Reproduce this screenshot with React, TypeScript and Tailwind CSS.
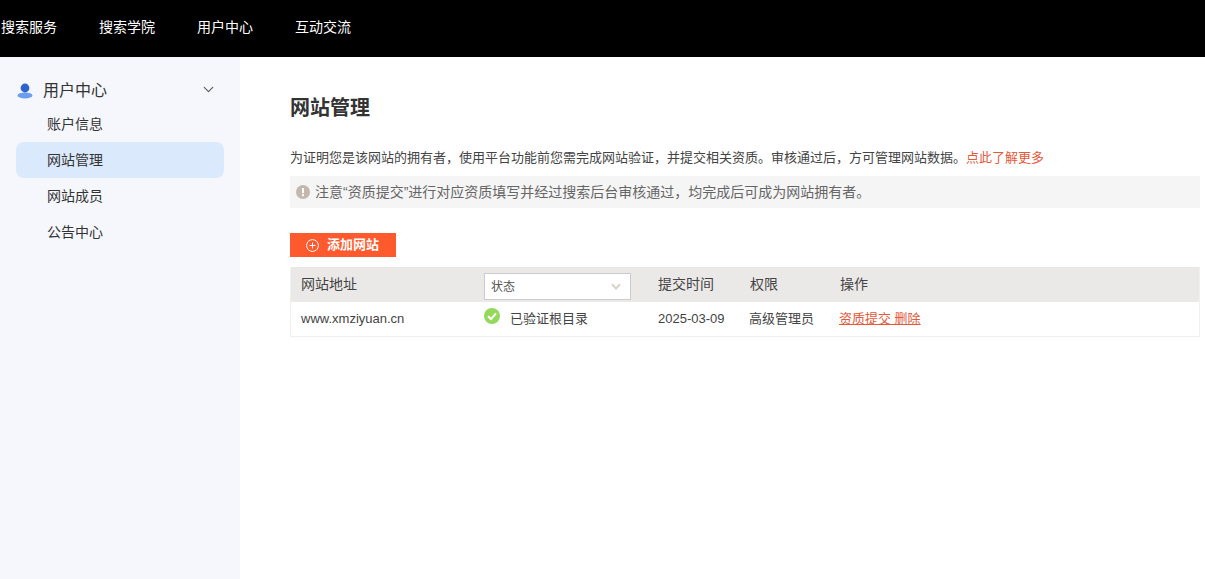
import React from 'react';
import { ChevronDown } from 'lucide-react';

const font = 'font-["Liberation_Sans","Noto_Sans_CJK_SC",sans-serif]';

const navItems = ['搜索服务', '搜索学院', '用户中心', '互动交流'];
const sideItems = ['账户信息', '网站管理', '网站成员', '公告中心'];

const UserIcon = () => (
  <svg width="16" height="16" viewBox="0 0 16 16">
    <ellipse cx="8" cy="12.4" rx="7.4" ry="3" fill="#6b9df0" />
    <circle cx="8" cy="5" r="4.4" fill="#2f63cc" />
  </svg>
);

const Sidebar = () => (
  <aside className="w-[240px] shrink-0 bg-[#f5f7fc] pt-[19px] px-4">
    <div className="flex h-[30px] items-center text-[#333] text-[16px]">
      <span className="ml-[1px] flex w-[26px]"><UserIcon /></span>
      <span className="flex-1">用户中心</span>
      <ChevronDown size={17} strokeWidth={1.5} className="mr-[7px] -mt-[3px] text-[#555]" />
    </div>
    {sideItems.map((item) => (
      <div
        key={item}
        className={`flex h-9 items-center rounded-lg pl-[31px] text-[14px] text-[#333] ${item === '网站管理' ? 'bg-[#dbe9fd]' : ''}`}
      >
        {item}
      </div>
    ))}
  </aside>
);

const Table = () => (
  <div className="mt-[10px] w-[910px] border border-[#f0f0f0] border-t-0 text-[13px] text-[#444]">
    <div className="flex h-[35px] items-center bg-[#ebe9e7] text-[14px]">
      <div className="w-[193px] pl-[10px]">网站地址</div>
      <div className="w-[174px]">
        <div className="mt-[4px] flex h-[27px] w-[147px] items-center justify-between border border-[#ccc] bg-white pl-[6px] pr-[9px] text-[12px] text-[#555]">
          状态
          <svg width="10" height="7" viewBox="0 0 10 7">
            <path d="M1 1.2 5 5.4 9 1.2" fill="none" stroke="#d8d4cc" strokeWidth="2.2" />
          </svg>
        </div>
      </div>
      <div className="w-[92px]">提交时间</div>
      <div className="w-[90px]">权限</div>
      <div>操作</div>
    </div>
    <div className="flex h-[34px] items-center bg-white">
      <div className="w-[193px] pl-[10px]">www.xmziyuan.cn</div>
      <div className="flex w-[174px] items-center">
        <svg width="16" height="16" viewBox="0 0 16 16" className="-mt-[7px]">
          <circle cx="8" cy="8" r="8" fill="#95d95a" />
          <path d="M4 8.2 7 11 12 5.4" fill="none" stroke="#fff" strokeWidth="2" />
        </svg>
        <span className="ml-[10px]">已验证根目录</span>
      </div>
      <div className="w-[91px]">2025-03-09</div>
      <div className="w-[90px]">高级管理员</div>
      <div className="text-[#e4593a] underline">资质提交 删除</div>
    </div>
  </div>
);

export default function App() {
  return (
    <div className={`h-[579px] w-[1205px] overflow-hidden bg-white ${font}`}>
      <header className="flex h-[57px] items-center gap-[42px] bg-black pb-[3px] pl-[1px] text-[14px] text-white">
        {navItems.map((item) => (
          <span key={item}>{item}</span>
        ))}
      </header>
      <div className="flex h-[522px]">
        <Sidebar />
        <main className="pl-[50px] pt-[37px]">
          <h1 className="text-[20px] leading-[28px] font-bold text-[#333]">网站管理</h1>
          <p className="mt-[27px] text-[13px] leading-[18px] text-[#444]">
            为证明您是该网站的拥有者，使用平台功能前您需完成网站验证，并提交相关资质。审核通过后，方可管理网站数据。
            <span className="text-[#e4593a]">点此了解更多</span>
          </p>
          <div className="mt-[9px] flex h-[32px] w-[910px] items-center bg-[#f5f5f5] pl-[6px] text-[14px] text-[#666]">
            <svg width="14" height="14" viewBox="0 0 14 14" className="mr-[5px]">
              <circle cx="7" cy="7" r="7" fill="#c3b7ae" />
              <rect x="6" y="3" width="2" height="5.2" fill="#fff" />
              <rect x="6" y="9.2" width="2" height="2" fill="#fff" />
            </svg>
            注意“资质提交”进行对应资质填写并经过搜索后台审核通过，均完成后可成为网站拥有者。
          </div>
          <button className="mt-[25px] flex h-[24px] w-[106px] items-center bg-[#ff5a2e] pl-4 text-[13px] font-bold text-white">
            <svg width="13" height="13" viewBox="0 0 13 13" className="mr-2">
              <circle cx="6.5" cy="6.5" r="5.9" fill="none" stroke="#fff" strokeWidth="1" />
              <path d="M6.5 3.5v6M3.5 6.5h6" stroke="#fff" strokeWidth="1" />
            </svg>
            添加网站
          </button>
          <Table />
        </main>
      </div>
    </div>
  );
}
